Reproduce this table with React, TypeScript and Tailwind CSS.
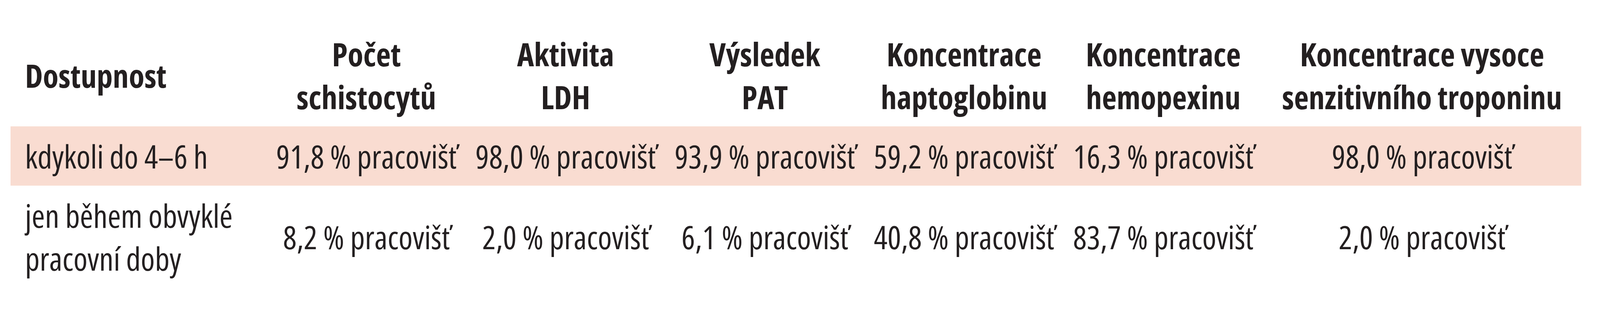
const header = [
  ['Počet', 'schistocytů'],
  ['Aktivita', 'LDH'],
  ['Výsledek', 'PAT'],
  ['Koncentrace', 'haptoglobinu'],
  ['Koncentrace', 'hemopexinu'],
  ['Koncentrace vysoce', 'senzitivního troponinu'],
];

const rows = [
  {
    label: ['kdykoli do 4–6 h'],
    values: ['91,8', '98,0', '93,9', '59,2', '16,3', '98,0'],
    shaded: true,
  },
  {
    label: ['jen během obvyklé', 'pracovní doby'],
    values: ['8,2', '2,0', '6,1', '40,8', '83,7', '2,0'],
    shaded: false,
  },
];

const grid = 'grid grid-cols-[656px_510px_510px_510px_510px_510px_815px]';

export default function App() {
  return (
    <div
      className="min-h-[800px] w-full bg-white pl-[27px] pt-[62px] text-[82px] leading-[110px] text-[#231f20] [font-stretch:75%]"
      style={{ fontFamily: "'Open Sans', 'Noto Sans', sans-serif" }}
    >
      {/* Header */}
      <div className={`${grid} h-[262px] font-bold`}>
        <div className="flex items-center pl-[37px]">Dostupnost</div>
        {header.map((h, i) => (
          <div key={i} className="flex flex-col items-center justify-center text-center whitespace-nowrap">
            <span>{h[0]}</span>
            <span>{h[1]}</span>
          </div>
        ))}
      </div>

      {/* Body */}
      {rows.map((r, ri) => (
        <div key={ri} className={`${grid} w-fit py-[21px] ${r.shaded ? 'bg-[#f9dcd1]' : ''}`}>
          <div className="flex flex-col justify-center pl-[37px] whitespace-nowrap">
            {r.label.map((l) => (
              <span key={l}>{l}</span>
            ))}
          </div>
          {r.values.map((v, vi) => (
            <div key={vi} className="flex items-center justify-center whitespace-nowrap">
              {v} % pracovišť
            </div>
          ))}
        </div>
      ))}
    </div>
  );
}
